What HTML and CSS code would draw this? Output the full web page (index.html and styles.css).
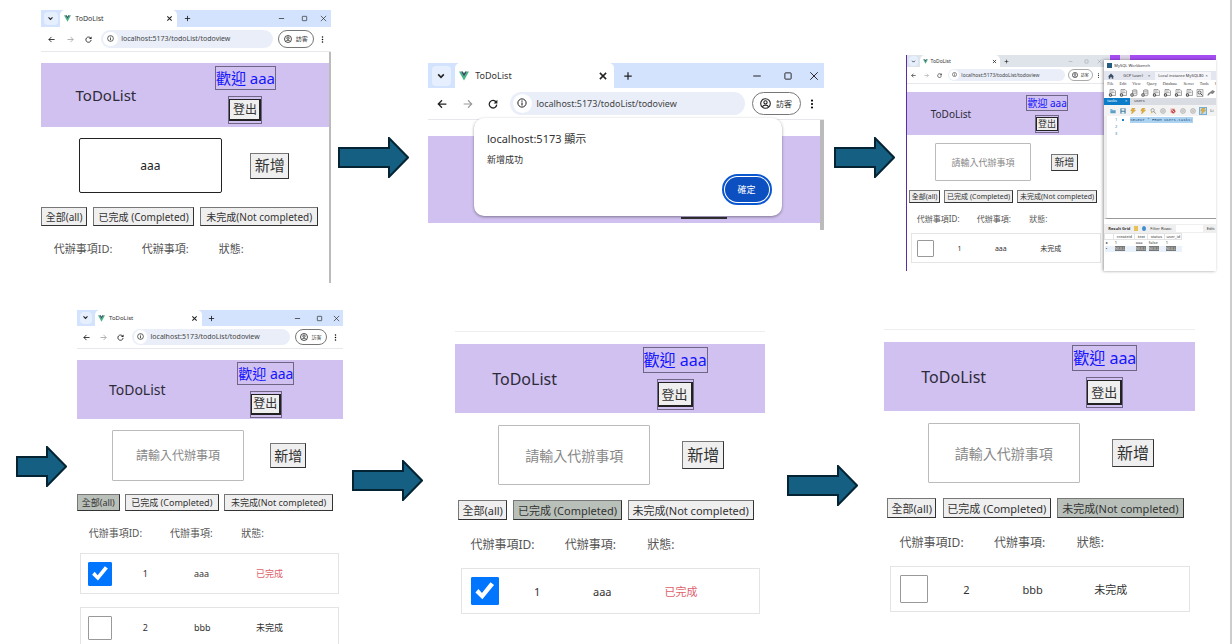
FILE: index.html
```html
<!DOCTYPE html>
<html lang="zh-Hant">
<head>
<meta charset="utf-8">
<title>ToDoList</title>
<link rel="stylesheet" href="styles.css">
</head>
<body>
<svg class="symbols" aria-hidden="true">
  <symbol id="vue" viewBox="0 0 20 18"><path fill="#41b883" d="M0 0h4l6 10.500L16 0h4L10 18z"/><path fill="#34495e" d="M4 0h3.700L10 4l2.300-4H16l-6 10.500z"/></symbol>
  <symbol id="chev" viewBox="0 0 16 16"><path d="M3.500 5.500 8 10l4.500-4.500" fill="none" stroke="currentColor" stroke-width="2.600"/></symbol>
  <symbol id="x" viewBox="0 0 16 16"><path d="m3 3 10 10M13 3 3 13" fill="none" stroke="currentColor" stroke-width="2.400"/></symbol>
  <symbol id="close" viewBox="0 0 16 16"><path d="m2 2 12 12M14 2 2 14" fill="none" stroke="currentColor" stroke-width="1.500"/></symbol>
  <symbol id="plus" viewBox="0 0 16 16"><path d="M8 2v12M2 8h12" fill="none" stroke="currentColor" stroke-width="2"/></symbol>
  <symbol id="min" viewBox="0 0 16 16"><path d="M2 8h12" fill="none" stroke="currentColor" stroke-width="1.600"/></symbol>
  <symbol id="max" viewBox="0 0 16 16"><rect x="3" y="3" width="10" height="10" rx="1" fill="none" stroke="currentColor" stroke-width="1.500"/></symbol>
  <symbol id="back" viewBox="0 0 16 16"><path d="M15 8H2M8 2 2 8l6 6" fill="none" stroke="currentColor" stroke-width="2"/></symbol>
  <symbol id="fwd" viewBox="0 0 16 16"><path d="M1 8h13M8 2l6 6-6 6" fill="none" stroke="currentColor" stroke-width="1.700"/></symbol>
  <symbol id="reload" viewBox="0 0 16 16"><path d="M13 5A6 6 0 1 0 14 9" fill="none" stroke="currentColor" stroke-width="2"/><path d="M15 1v6H9z" fill="currentColor"/></symbol>
  <symbol id="info" viewBox="0 0 16 16"><circle cx="8" cy="8" r="6.600" fill="none" stroke="currentColor" stroke-width="1.600"/><path d="M8 7v5M8 4v1.800" stroke="currentColor" stroke-width="1.800"/></symbol>
  <symbol id="user" viewBox="0 0 16 16"><circle cx="8" cy="8" r="7" fill="none" stroke="currentColor" stroke-width="1.600"/><circle cx="8" cy="6.300" r="2.400" fill="none" stroke="currentColor" stroke-width="1.500"/><path d="M3.500 13c1.500-3.500 7.500-3.500 9 0" fill="none" stroke="currentColor" stroke-width="1.500"/></symbol>
  <symbol id="dots" viewBox="0 0 16 16"><circle cx="8" cy="2.500" r="1.700"/><circle cx="8" cy="8" r="1.700"/><circle cx="8" cy="13.500" r="1.700"/></symbol>
  <symbol id="sqlfile" viewBox="0 0 16 16"><path d="M4 1h8l3 3v9H4z" fill="#f2f2f2" stroke="#555"/><path d="M6 4h5M6 7h7" stroke="#777"/><circle cx="5" cy="12" r="3.500" fill="#444"/><path d="M5 10v4M3 12h4" stroke="#fff"/></symbol>
  <symbol id="sqldb" viewBox="0 0 16 16"><path d="M5 3c0-2 9-2 9 0v9c0 2-9 2-9 0z" fill="#eee" stroke="#555"/><path d="M5 3c0 2 9 2 9 0M5 7c0 2 9 2 9 0" fill="none" stroke="#666"/><circle cx="4" cy="12" r="3.500" fill="#444"/><path d="M4 10v4M2 12h4" stroke="#fff"/></symbol>
  <symbol id="find" viewBox="0 0 16 16"><path d="M2 1h12v14H2z" fill="#eee" stroke="#666"/><circle cx="7" cy="7" r="3" fill="none" stroke="#444" stroke-width="1.500"/><path d="m9 9 4 4" stroke="#444" stroke-width="2"/></symbol>
  <symbol id="plug" viewBox="0 0 16 16"><path d="m2 13 5-5 5 1 3-4-4-2-5 4-4 3z" fill="#888" stroke="#555"/></symbol>
  <symbol id="folder" viewBox="0 0 16 16"><path d="M1 3h5l1 2h8v9H1z" fill="#5c9fc4"/><path d="M1 7h14" stroke="#bde0f2"/></symbol>
  <symbol id="save" viewBox="0 0 16 16"><path d="M1 1h14v14H1z" fill="#477b9f"/><path d="M4 2h8v5H4zM4 10h8v5H4z" fill="#e5f0f6"/></symbol>
  <symbol id="bolt" viewBox="0 0 16 16"><path d="M6 0h7l-3 6h5L4 16l2-8H2z" fill="#e2b13c" stroke="#b98a2b"/></symbol>
  <symbol id="magnify" viewBox="0 0 16 16"><circle cx="7" cy="6" r="4.500" fill="#eee" stroke="#777" stroke-width="1.500"/><path d="m10 9 5 6" stroke="#777" stroke-width="2"/><path d="m4 8-2 7 5-4" fill="#e2b13c"/></symbol>
  <symbol id="disc" viewBox="0 0 16 16"><circle cx="8" cy="8" r="6.500" fill="#ddd" stroke="#999" stroke-width="1.500"/><path d="M5 8h6" stroke="#aaa" stroke-width="2"/></symbol>
  <symbol id="stop" viewBox="0 0 16 16"><path d="M1 1h12v12H1z" fill="#e6b9b9"/><circle cx="9" cy="9" r="5.500" fill="#c94848"/><path d="m6 6 6 6" stroke="#fff" stroke-width="2"/></symbol>
  <symbol id="home" viewBox="0 0 16 16"><path d="M8 1 0 9h2v6h4v-4h4v4h4V9h2z" fill="#3c4f66"/></symbol>
</svg>

<main class="canvas">
  <div class="lane lane-top">
    <section class="shot shot-input size-m">
      <div class="browser">
        <div class="tabs">
          <button class="tab-search" aria-label="Search tabs"><svg><use href="#chev"/></svg></button>
          <div class="tab"><svg><use href="#vue"/></svg><span>ToDoList</span><svg class="tiny"><use href="#x"/></svg></div>
          <svg><use href="#plus"/></svg><i></i><svg><use href="#min"/></svg><svg><use href="#max"/></svg><svg><use href="#close"/></svg>
        </div>
        <div class="toolbar">
          <svg><use href="#back"/></svg><svg class="dim"><use href="#fwd"/></svg><svg><use href="#reload"/></svg>
          <div class="url"><span class="site"><svg><use href="#info"/></svg></span><span>localhost:5173/todoList/todoview</span></div>
          <button class="guest"><svg><use href="#user"/></svg>訪客</button>
          <svg><use href="#dots"/></svg>
        </div>
      </div>
      <div class="page scrolled">
        <header class="bar"><h1>ToDoList</h1><div class="account"><a href="#">歡迎 aaa</a><div class="logout"><button>登出</button></div></div></header>
        <form class="entry"><input class="focused" type="text" value="aaa" aria-label="代辦事項"><button type="button">新增</button></form>
        <nav class="filters"><button>全部(all)</button><button>已完成 (Completed)</button><button>未完成(Not completed)</button></nav>
        <div class="heads"><span>代辦事項ID:</span><span>代辦事項:</span><span>狀態:</span></div>
      </div>
    </section>

    <svg class="arrow arrow-a" viewBox="0 0 71 41"><path d="M1 11H51V1L70 20.500 51 40V30H1z"/></svg>

    <section class="shot shot-dialog size-d">
      <div class="browser">
        <div class="tabs">
          <button class="tab-search" aria-label="Search tabs"><svg><use href="#chev"/></svg></button>
          <div class="tab"><svg><use href="#vue"/></svg><span>ToDoList</span><svg class="tiny"><use href="#x"/></svg></div>
          <svg><use href="#plus"/></svg><i></i><svg><use href="#min"/></svg><svg><use href="#max"/></svg><svg><use href="#close"/></svg>
        </div>
        <div class="toolbar">
          <svg><use href="#back"/></svg><svg class="dim"><use href="#fwd"/></svg><svg><use href="#reload"/></svg>
          <div class="url"><span class="site"><svg><use href="#info"/></svg></span><span>localhost:5173/todoList/todoview</span></div>
          <button class="guest"><svg><use href="#user"/></svg>訪客</button>
          <svg><use href="#dots"/></svg>
        </div>
      </div>
      <div class="page scrolled">
        <div class="bar covered"><div class="edge"></div></div>
      </div>
      <div class="dialog" role="dialog" aria-label="localhost:5173 顯示">
        <h2>localhost:5173 顯示</h2>
        <p>新增成功</p>
        <button>確定</button>
      </div>
    </section>

    <svg class="arrow arrow-b" viewBox="0 0 61 41"><path d="M1 11H41V1L60 20.500 41 40V30H1z"/></svg>

    <section class="shot shot-db size-s">
      <div class="db-left">
        <div class="browser">
          <div class="tabs">
            <button class="tab-search" aria-label="Search tabs"><svg><use href="#chev"/></svg></button>
            <div class="tab"><svg><use href="#vue"/></svg><span>ToDoList</span><svg class="tiny"><use href="#x"/></svg></div>
            <svg><use href="#plus"/></svg><i></i><svg class="dim"><use href="#min"/></svg><svg class="dim"><use href="#max"/></svg><svg class="dim"><use href="#close"/></svg>
          </div>
          <div class="toolbar">
            <svg><use href="#back"/></svg><svg class="dim"><use href="#fwd"/></svg><svg><use href="#reload"/></svg>
            <div class="url"><span class="site"><svg><use href="#info"/></svg></span><span>localhost:5173/todoList/todoview</span></div>
            <button class="guest"><svg><use href="#user"/></svg>訪客</button>
            <svg><use href="#dots"/></svg>
          </div>
        </div>
        <div class="page">
          <header class="bar"><h1>ToDoList</h1><div class="account"><a href="#">歡迎 aaa</a><div class="logout"><button>登出</button></div></div></header>
          <form class="entry"><input type="text" placeholder="請輸入代辦事項" aria-label="代辦事項"><button type="button">新增</button></form>
          <nav class="filters"><button>全部(all)</button><button>已完成 (Completed)</button><button>未完成(Not completed)</button></nav>
          <div class="heads"><span>代辦事項ID:</span><span>代辦事項:</span><span>狀態:</span></div>
          <label class="item"><input type="checkbox"><span>1</span><span>aaa</span><span>未完成</span></label>
        </div>
      </div>
      <div class="backdrop"><i class="pale"></i><i></i><i class="light"></i></div>
      <div class="bench">
        <div class="bench-title"><i></i>MySQL Workbench</div>
        <div class="bench-tabs"><svg><use href="#home"/></svg><span>GCP (user)</span><span>×</span><span class="on">Local instance MySQL80 &nbsp;×</span></div>
        <div class="menu"><span>File</span><span>Edit</span><span>View</span><span>Query</span><span>Database</span><span>Server</span><span>Tools</span><span>S</span></div>
        <div class="icons big"><svg><use href="#sqlfile"/></svg><svg><use href="#sqlfile"/></svg><svg><use href="#sqldb"/></svg><svg><use href="#sqldb"/></svg><svg><use href="#sqlfile"/></svg><svg><use href="#sqlfile"/></svg><svg><use href="#sqlfile"/></svg><svg><use href="#sqlfile"/></svg><svg><use href="#find"/></svg><svg><use href="#plug"/></svg></div>
        <div class="files"><span class="on">tasks <b>×</b></span><span>users</span></div>
        <div class="icons"><svg><use href="#folder"/></svg><svg><use href="#save"/></svg><svg><use href="#bolt"/></svg><svg><use href="#bolt"/></svg><svg><use href="#magnify"/></svg><svg><use href="#disc"/></svg><svg><use href="#stop"/></svg><svg><use href="#disc"/></svg><svg><use href="#disc"/></svg><svg class="picked"><use href="#bolt"/></svg><span>Li</span></div>
        <div class="code">
          <div><span>1</span><i></i><code>SELECT * FROM users.tasks;</code></div>
          <div><span>2</span></div>
          <div><span>3</span></div>
        </div>
        <div class="result-bar"><strong>Result Grid</strong><i class="sheet"></i><i class="sync"></i><label for="rows">Filter Rows:</label><input id="rows" type="text"><span>Edit:</span></div>
        <table class="result">
          <thead><tr><th class="mark"></th><th class="c-id">createid</th><th class="c-text">text</th><th class="c-user">status</th><th class="c-user">user_id</th></tr></thead>
          <tbody>
            <tr><td>▸</td><td>1</td><td>aaa</td><td>false</td><td>1</td></tr>
            <tr class="empty"><td>•</td><td><b>NULL</b></td><td><b>NULL</b></td><td><b>NULL</b></td><td><b>NULL</b></td></tr>
          </tbody>
        </table>
      </div>
    </section>
  </div>

  <div class="lane lane-bottom">
    <svg class="arrow arrow-c" viewBox="0 0 51 41"><path d="M1 11H31V1L50 20.500 31 40V30H1z"/></svg>

    <section class="shot shot-all size-n">
      <div class="browser">
        <div class="tabs">
          <button class="tab-search" aria-label="Search tabs"><svg><use href="#chev"/></svg></button>
          <div class="tab"><svg><use href="#vue"/></svg><span>ToDoList</span><svg class="tiny"><use href="#x"/></svg></div>
          <svg><use href="#plus"/></svg><i></i><svg><use href="#min"/></svg><svg><use href="#max"/></svg><svg><use href="#close"/></svg>
        </div>
        <div class="toolbar">
          <svg><use href="#back"/></svg><svg class="dim"><use href="#fwd"/></svg><svg><use href="#reload"/></svg>
          <div class="url"><span class="site"><svg><use href="#info"/></svg></span><span>localhost:5173/todoList/todoview</span></div>
          <button class="guest"><svg><use href="#user"/></svg>訪客</button>
          <svg><use href="#dots"/></svg>
        </div>
      </div>
      <div class="page">
        <header class="bar"><h1>ToDoList</h1><div class="account"><a href="#">歡迎 aaa</a><div class="logout"><button>登出</button></div></div></header>
        <form class="entry"><input type="text" placeholder="請輸入代辦事項" aria-label="代辦事項"><button type="button">新增</button></form>
        <nav class="filters"><button class="active">全部(all)</button><button>已完成 (Completed)</button><button>未完成(Not completed)</button></nav>
        <div class="heads"><span>代辦事項ID:</span><span>代辦事項:</span><span>狀態:</span></div>
        <label class="item"><input type="checkbox" checked><span>1</span><span>aaa</span><span class="done">已完成</span></label>
        <label class="item"><input type="checkbox"><span>2</span><span>bbb</span><span>未完成</span></label>
      </div>
    </section>

    <svg class="arrow arrow-d" viewBox="0 0 71 41"><path d="M1 11H51V1L70 20.500 51 40V30H1z"/></svg>

    <section class="shot shot-done size-l">
      <div class="page ruled">
        <header class="bar"><h1>ToDoList</h1><div class="account"><a href="#">歡迎 aaa</a><div class="logout"><button>登出</button></div></div></header>
        <form class="entry"><input type="text" placeholder="請輸入代辦事項" aria-label="代辦事項"><button type="button">新增</button></form>
        <nav class="filters"><button>全部(all)</button><button class="active">已完成 (Completed)</button><button>未完成(Not completed)</button></nav>
        <div class="heads"><span>代辦事項ID:</span><span>代辦事項:</span><span>狀態:</span></div>
        <label class="item"><input type="checkbox" checked><span>1</span><span>aaa</span><span class="done">已完成</span></label>
      </div>
    </section>

    <svg class="arrow arrow-e" viewBox="0 0 71 41"><path d="M1 11H51V1L70 20.500 51 40V30H1z"/></svg>

    <section class="shot shot-open size-l">
      <div class="page ruled">
        <header class="bar"><h1>ToDoList</h1><div class="account"><a href="#">歡迎 aaa</a><div class="logout"><button>登出</button></div></div></header>
        <form class="entry"><input type="text" placeholder="請輸入代辦事項" aria-label="代辦事項"><button type="button">新增</button></form>
        <nav class="filters"><button>全部(all)</button><button>已完成 (Completed)</button><button class="active">未完成(Not completed)</button></nav>
        <div class="heads"><span>代辦事項ID:</span><span>代辦事項:</span><span>狀態:</span></div>
        <label class="item"><input type="checkbox"><span>2</span><span>bbb</span><span>未完成</span></label>
      </div>
    </section>
  </div>
</main>
</body>
</html>
```
FILE: styles.css
```css
* { box-sizing: border-box; }
body {
  margin: 0;
  overflow: hidden;
  background: #fff;
  color: #333;
  font-family: "Noto Sans", "Noto Sans CJK TC", sans-serif;
}
button, input { margin: 0; padding: 0; font-family: inherit; color: inherit; }
h1, h2, p { margin: 0; font-weight: 400; }
svg { display: block; }
.symbols { position: absolute; width: 0; height: 0; }

.canvas {
  height: 100vh;
  overflow: hidden;
  padding-top: 10px;
  border-right: 2px solid #ccc;
}
.lane { display: grid; align-items: start; }
.lane-top {
  grid-template-columns: 290fr 97px 396fr 82px 310fr;
  padding: 0 14px 0 41px;
}
.lane-bottom {
  grid-template-columns: 61px 266fr 112px 310fr 119px 311fr;
  margin-top: 27px;
  padding: 0 35px 0 16px;
}
.shot { position: relative; min-width: 0; }

.arrow { height: 41px; fill: #156082; stroke: #042433; stroke-width: 2; }
.arrow-a { width: 71px; margin: 127px 0 0 7px; }
.arrow-b { width: 61px; margin: 127px 0 0 10px; }
.arrow-c { width: 51px; margin-top: 136px; }
.arrow-d { width: 71px; margin: 150px 0 0 9px; }
.arrow-e { width: 71px; margin: 155px 0 0 22px; }

/* size steps */
.size-s {
  --strip: 12px; --tool: 17px; --ic: 5px; --tab-fs: 5px; --guest-fs: 4px; --url-fs: 5px; --pad: 8px;
  --bar: 43px; --title: 10px; --user: 10px; --user-h: 16px; --out: 9px; --out-h: 14px; --out-w: 22px; --out-pad: 1px;
  --in-gap: 8px; --in-h: 38px; --in-fs: 9px; --add: 10px; --add-w: 27px; --add-h: 17px;
  --f-gap: 9px; --f-h: 13px; --f-fs: 7px; --head-h: 30px; --head-fs: 8px;
  --row-h: 30px; --row-gap: 10px; --box: 17px; --row-fs: 7px;
}
.size-n {
  --strip: 16px; --tool: 23px; --ic: 7px; --tab-fs: 6px; --guest-fs: 5px; --url-fs: 7px; --pad: 11px;
  --bar: 59px; --title: 14px; --user: 14px; --user-h: 23px; --out: 12px; --out-h: 21px; --out-w: 30px; --out-pad: 2px;
  --in-gap: 11px; --in-h: 51px; --in-fs: 12px; --add: 14px; --add-w: 36px; --add-h: 25px;
  --f-gap: 13px; --f-h: 17px; --f-fs: 9px; --head-h: 42px; --head-fs: 10px;
  --row-h: 41px; --row-gap: 13px; --box: 24px; --row-fs: 9px;
}
.size-m {
  --strip: 17px; --tool: 25px; --ic: 7px; --tab-fs: 7px; --guest-fs: 6px; --url-fs: 7px; --pad: 11px;
  --bar: 64px; --title: 15px; --user: 15px; --user-h: 24px; --out: 12px; --out-h: 22px; --out-w: 32px; --out-pad: 2px;
  --in-gap: 11px; --in-h: 55px; --in-fs: 12px; --add: 15px; --add-w: 39px; --add-h: 26px;
  --f-gap: 14px; --f-h: 19px; --f-fs: 10px; --head-h: 43px; --head-fs: 11px;
}
.size-d {
  --strip: 25px; --tool: 32px; --ic: 10px; --tab-fs: 9px; --guest-fs: 8px; --url-fs: 9px; --pad: 16px;
}
.size-l {
  --bar: 69px; --title: 16px; --user: 16px; --user-h: 26px; --out: 13px; --out-h: 25px; --out-w: 35px; --out-pad: 2px;
  --in-gap: 12px; --in-h: 60px; --in-fs: 14px; --add: 16px; --add-w: 42px; --add-h: 28px;
  --f-gap: 15px; --f-h: 20px; --f-fs: 11px; --head-h: 48px; --head-fs: 12px;
  --row-h: 46px; --row-gap: 15px; --box: 28px; --row-fs: 11px;
}

/* browser frame */
.browser svg { width: var(--ic); height: var(--ic); color: #222; }
.browser .dim { color: #999; }
.tabs {
  display: grid;
  grid-template-columns: 6.7% 40.3% 7% 1fr 8% 8% 5%;
  align-items: center;
  justify-items: center;
  height: var(--strip);
  background: #d3e3fd;
}
.tab-search {
  display: grid;
  place-items: center;
  width: 72%;
  height: 80%;
  border: 0;
  border-radius: 4px;
  background: #e6effd;
}
.tab {
  display: flex;
  align-items: center;
  gap: 4%;
  width: 100%;
  height: 100%;
  padding: 0 4% 0 3%;
  border-radius: 5px 5px 0 0;
  background: #fff;
  font-size: var(--tab-fs);
}
.tab .tiny { margin-left: auto; }
.toolbar {
  display: grid;
  grid-template-columns: 7% 6.2% 6.4% 60.5% 14% 1fr;
  align-items: center;
  justify-items: center;
  height: var(--tool);
  border-bottom: 1px solid #e8e8ec;
  background: #fff;
}
.url {
  display: flex;
  align-items: center;
  gap: 2%;
  justify-self: end;
  width: 98%;
  height: 72%;
  padding-left: 1%;
  border-radius: 12px;
  background: #e9eef9;
  color: #444;
  font-size: var(--url-fs);
  white-space: nowrap;
}
.site { display: grid; place-items: center; height: 85%; aspect-ratio: 1; border-radius: 50%; background: #fff; }
.guest {
  display: flex;
  align-items: center;
  justify-content: center;
  gap: 10%;
  justify-self: end;
  width: 88%;
  height: 72%;
  border: 1px solid #777;
  border-radius: 12px;
  background: #fff;
  font-size: var(--guest-fs);
  white-space: nowrap;
}
.browser .guest svg { width: calc(var(--ic) + 1px); height: calc(var(--ic) + 1px); flex: none; }
.size-s .browser .tabs { background: #dfe3ea; }
.size-s .guest { border-color: #aaa; }

/* to-do page */
.page { padding-top: var(--pad); }
.scrolled { border-right: 2px solid #bbb; }
.ruled { border-top: 1px solid #eee; padding-top: 12px; }
.bar {
  display: grid;
  grid-template-columns: 43.2% 47.7%;
  align-items: center;
  height: var(--bar);
  padding-left: 12%;
  background: #d1c1f0;
}
.bar h1 { font-size: var(--title); color: #2d2b38; }
.account { display: flex; flex-direction: column; align-items: center; gap: 6px; }
.account a {
  height: var(--user-h);
  border: 1px solid #6e6684;
  color: #1414ff;
  font-size: var(--user);
  line-height: calc(var(--user-h) - 2px);
  text-decoration: none;
  white-space: nowrap;
}
.logout { padding: var(--out-pad) 0; border: 1px solid #6e6684; }
.logout button {
  display: block;
  width: var(--out-w);
  height: var(--out-h);
  border: 1px solid #222;
  border-right-width: 2px;
  border-bottom-width: 2px;
  background: #efefef;
  font-size: var(--out);
  line-height: 1;
}
.size-s .account { gap: 4px; }
.size-s .logout button { border-width: 1px; }
.entry { display: flex; align-items: center; gap: 10%; margin: var(--in-gap) 0 var(--f-gap); padding-left: 14%; }
.entry input {
  width: 57%;
  height: var(--in-h);
  border: 1px solid #bbb;
  border-radius: 1px;
  background: #fff;
  font-size: var(--in-fs);
  text-align: center;
}
.size-l .entry { gap: 12%; }
.size-m .entry, .size-n .entry { gap: 11.5%; padding-left: 13.3%; }
.size-s .entry { gap: 11.5%; }
.entry input::placeholder { color: #888; opacity: 1; }
.entry .focused { border: 1px solid #222; border-radius: 2px; color: #222; }
.entry button, .filters button {
  border: 1px solid #333;
  border-top-color: #777;
  border-left-color: #777;
  background: #efefef;
  line-height: 1;
  white-space: nowrap;
}
.entry button { width: var(--add-w); height: var(--add-h); font-size: var(--add); }
.filters { display: flex; gap: 2%; padding-left: 1%; }
.filters button { flex: 0 0 16%; height: var(--f-h); font-size: var(--f-fs); }
.filters button:nth-child(2) { flex-basis: 35.3%; }
.filters button:nth-child(3) { flex-basis: 41%; }
.filters .active { background: #b9c0b9; }
.size-m .filters, .size-n .filters { padding-left: 0; }
.heads {
  display: grid;
  grid-template-columns: 32% 28% 1fr;
  align-items: center;
  height: var(--head-h);
  padding-left: 5%;
  color: #555;
  font-size: var(--head-fs);
  white-space: nowrap;
}
.size-m .heads, .size-n .heads { padding-left: 4.4%; }
.size-m .page { min-height: 231px; }
.item {
  display: grid;
  grid-template-columns: 22% 20.4% 24.8% 1fr;
  align-items: center;
  height: var(--row-h);
  margin: 0 1.5% var(--row-gap) 2%;
  padding-left: 2.7%;
  border: 1px solid #e4e4e4;
  font-size: var(--row-fs);
  white-space: nowrap;
}
.size-n .item { margin-left: 1%; }
.item .done { color: #e0616b; }
.item input {
  appearance: none;
  position: relative;
  width: var(--box);
  height: var(--box);
  border: 1px solid #999;
  border-radius: 1px;
  background: #fff;
}
.item input:checked { border-color: #0075ff; background: #0075ff; }
.item input:checked::after {
  content: "";
  position: absolute;
  inset: 12%;
  background: #fff;
  clip-path: polygon(4% 57%, 19% 40%, 37% 60%, 80% 6%, 98% 20%, 39% 92%);
}

/* alert */
.size-d .page { height: 110px; border-right-width: 4px; }
.size-d .bar { display: flex; align-items: flex-end; height: 87px; padding: 0 0 4px 64.5%; }
.edge { width: 33%; height: 2px; background: #333; }
.dialog {
  position: absolute;
  top: 55px;
  left: 11.6%;
  width: 77.7%;
  height: 98px;
  padding: 12px 13px;
  border-radius: 10px;
  background: #fff;
  box-shadow: 0 1px 3px rgba(0, 0, 0, .4);
}
.dialog h2 { font-size: 11px; line-height: 18px; }
.dialog p { margin-top: 4px; font-size: 9px; line-height: 16px; }
.dialog button {
  display: block;
  width: 44px;
  height: 25px;
  margin: 9px 0 0 auto;
  border: 0;
  border-radius: 13px;
  outline: 2px solid #0b57d0;
  outline-offset: 1px;
  background: #0b4fc0;
  color: #fff;
  font-size: 9px;
}
.shot-dialog { margin-top: 53px; }
.shot-db {
  display: grid;
  grid-template-columns: 198fr 112fr;
  grid-template-rows: 5px 211px;
  margin-top: 45px;
  border-left: 1px solid #5b2ba8;
  background: #fff;
}
.shot-done { margin-top: 21px; }
.shot-open { margin-top: 19px; }

/* database client */
.db-left { grid-row: 1 / 3; min-width: 0; background: #fff; }
.backdrop { display: grid; grid-template-columns: 6px 10px 10px; background: #a64df3; }
.backdrop .pale { background: #dfe3ea; }
.backdrop .light { background: #dcd3e6; }
.bench {
  min-width: 0;
  overflow: hidden;
  background: #fff;
  box-shadow: -1px 0 3px rgba(0, 0, 0, .4);
  font-size: 4px;
  line-height: 6px;
  white-space: nowrap;
}
.bench-title { display: flex; align-items: center; gap: 2px; height: 11px; padding-left: 3px; }
.bench-title i { width: 5px; height: 5px; background: #245c80; }
.bench-tabs { display: flex; align-items: center; gap: 5px; height: 9px; padding-left: 4px; background: #e3e5ef; }
.bench-tabs svg { width: 6px; height: 6px; margin-right: 4px; }
.bench-tabs .on { padding: 1px 3px; background: #f6f6fa; }
.menu { display: flex; gap: 6px; height: 7px; padding-left: 3px; font-family: "Liberation Serif", serif; line-height: 7px; }
.icons { display: flex; align-items: center; gap: 4px; height: 11px; padding-left: 6px; background: #f3f3f3; }
.icons svg { flex: none; width: 6px; height: 6px; }
.icons.big { gap: 3px; padding-left: 4px; background: #fff; }
.icons.big svg { width: 8px; height: 8px; }
.icons .picked { background: #bcdcf2; outline: 1px solid #78acd0; }
.files { display: flex; gap: 4px; height: 7px; background: #d9dde3; }
.files .on { display: flex; justify-content: space-between; width: 26px; padding: 0 3px; background: #0a7bc9; color: #fff; }
.files b { font-weight: 400; }
.code { height: 103px; border-left: 3px solid #eee; border-bottom: 1px solid #999; }
.code div { display: grid; grid-template-columns: 11px 10px 1fr; align-items: center; height: 7px; color: #3885b5; }
.code span { padding-right: 1px; text-align: right; }
.code i { justify-self: center; width: 2px; height: 2px; background: #1b83c9; }
.code code { justify-self: start; margin-left: 2px; background: #acd3f2; color: #264b78; font-family: "Liberation Mono", monospace; font-size: 4px; }
.result-bar { display: flex; align-items: center; gap: 4px; height: 9px; margin-top: 5px; padding-left: 4px; background: #efefef; }
.result-bar i { flex: none; width: 4px; height: 5px; }
.sheet { background: #e7c258; }
.sync { border-radius: 50%; background: #3e8ed0; }
.result-bar input { flex: 1; min-width: 0; height: 7px; border: 0; background: #fff; }
.result-bar span { padding-right: 1px; }
.result { border-collapse: collapse; font-size: 4px; line-height: 5px; }
.result th, .result td { height: 6px; padding: 0 1px; text-align: left; font-weight: 400; }
.result th { border: 1px solid #e3e3e3; text-align: center; }
.result .mark { width: 9px; }
.result .c-id { width: 21px; }
.result .c-text { width: 13px; }
.result .c-user { width: 17px; }
.result .empty { background: #e9f1fb; }
.result b { background: #777; color: #ddd; font-weight: 400; }
```
